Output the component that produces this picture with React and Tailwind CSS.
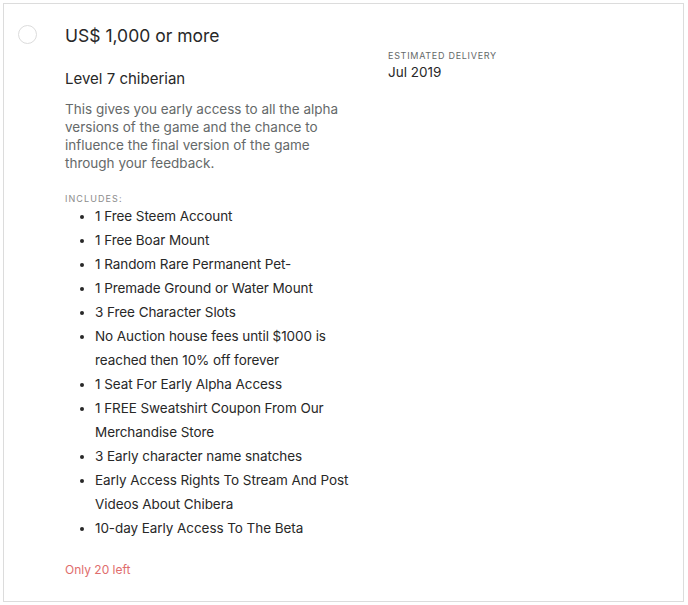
import React from 'react';

const items = [
  '1 Free Steem Account',
  '1 Free Boar Mount',
  '1 Random Rare Permanent Pet-',
  '1 Premade Ground or Water Mount',
  '3 Free Character Slots',
  'No Auction house fees until $1000 is reached then 10% off forever',
  '1 Seat For Early Alpha Access',
  '1 FREE Sweatshirt Coupon From Our Merchandise Store',
  '3 Early character name snatches',
  'Early Access Rights To Stream And Post Videos About Chibera',
  '10-day Early Access To The Beta',
];

export default function App() {
  return (
    <div className="h-[605px] w-[688px] bg-white p-[3px] font-['Inter',sans-serif]">
      <div className="flex h-[599px] w-[681px] border border-[#dcdcdc] bg-white">
        <div className="w-[61px] shrink-0 pl-[14px] pt-[21px]">
          <div className="h-[19px] w-[19px] rounded-full border border-[#dcdcdc]" />
        </div>
        <div className="flex flex-1">
          <div className="w-[323px] shrink-0 pt-[18px]">
            <div className="text-[17.5px] leading-[28px] text-[#282828]">US$ 1,000 or more</div>
            <div className="mt-[19px] text-[15px] leading-[20px] text-[#282828]">Level 7 chiberian</div>
            <p className="mt-[11px] w-[280px] text-[13.5px] leading-[18px] text-[#656969]">
              This gives you early access to all the alpha versions of the game and the chance to
              influence the final version of the game through your feedback.
            </p>
            <div className="mt-[21px] text-[9px] uppercase leading-[11px] tracking-[0.12em] text-[#8c8c8c]">
              Includes:
            </div>
            <ul className="w-[290px] list-disc pl-[30px] text-[13.5px] leading-[24px] tracking-[-0.005em] text-[#282828]">
              {items.map((item) => (
                <li key={item}>{item}</li>
              ))}
            </ul>
            <div className="mt-[22px] text-[12px] leading-[16px] text-[#e06d6d]">Only 20 left</div>
          </div>
          <div className="pt-[46px]">
            <div className="text-[9px] uppercase leading-[12px] tracking-[0.08em] text-[#656969]">
              Estimated delivery
            </div>
            <div className="mt-[1px] text-[13.5px] leading-[18px] text-[#282828]">Jul 2019</div>
          </div>
        </div>
      </div>
    </div>
  );
}
